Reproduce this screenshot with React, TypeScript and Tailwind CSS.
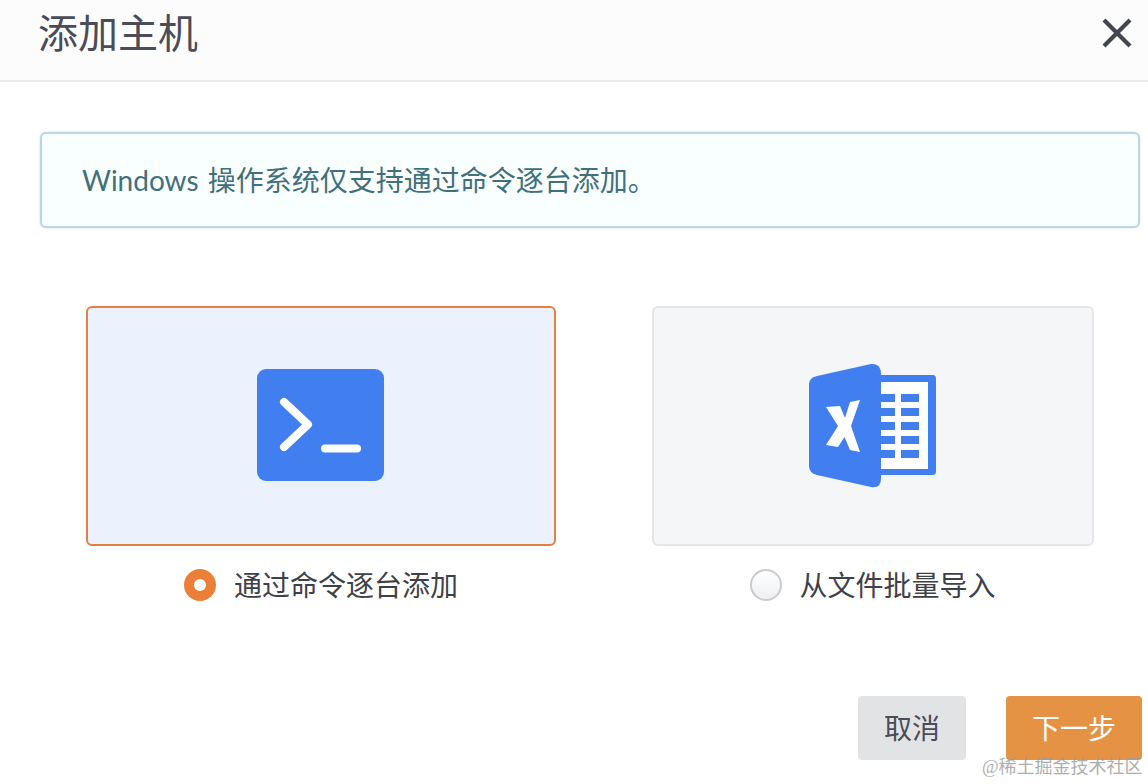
export default function App() {
  const sans = "font-['Lato','Noto_Sans_CJK_SC',sans-serif]";
  return (
    <div className={`relative flex h-[784px] w-[1148px] flex-col overflow-hidden bg-white ${sans}`}>
      <header className="flex h-[82px] shrink-0 items-center justify-between border-b-2 border-[#e9eaec] bg-[#fcfcfd] pb-[14px] pl-[38px] pr-[14px]">
        <h1 className="text-[40px] leading-[56px] font-normal text-[#4a4c58]">添加主机</h1>
        <svg width="34" height="34" viewBox="0 0 34 34">
          <path d="M4 4 L30 30 M30 4 L4 30" stroke="#43454f" strokeWidth="4.2" fill="none" />
        </svg>
      </header>

      <div className="ml-[40px] mr-[8px] mt-[50px] flex h-[96px] items-center rounded-[6px] border-2 border-[#bbd7e0] bg-[#f9feff] pl-[40px] text-[28px] font-normal text-[#41707c] shadow-[0_0_3px_#cfdfe5] [word-spacing:2px]">
        Windows 操作系统仅支持通过命令逐台添加。
      </div>

      <div className="ml-[86px] mt-[78px] flex gap-[96px]">
        <div className="flex w-[470px] flex-col items-center">
          <div className="flex h-[240px] w-full items-center justify-center rounded-[6px] border-2 border-[#e67f3f] bg-[#ebf2fd]">
            <svg width="128" height="112" viewBox="0 0 128 112" className="mb-[2px]">
              <rect x="0" y="0" width="127" height="112" rx="9" fill="#417ef0" />
              <path d="M27 33 L51 55.5 L27 78" stroke="#fff" strokeWidth="8" strokeLinecap="round" strokeLinejoin="round" fill="none" />
              <path d="M68 79.5 H100" stroke="#fff" strokeWidth="8" strokeLinecap="round" fill="none" />
            </svg>
          </div>
          <div className="mt-[23px] flex items-center gap-[18px]">
            <span className="flex h-[32px] w-[32px] items-center justify-center rounded-full bg-[#ec7f37]">
              <span className="h-[12px] w-[12px] rounded-full bg-white" />
            </span>
            <span className="text-[28px] leading-[32px] text-[#3f4149]">通过命令逐台添加</span>
          </div>
        </div>

        <div className="flex w-[442px] flex-col items-center">
          <div className="flex h-[240px] w-full items-center justify-center rounded-[6px] border-2 border-[#e4e6e9] bg-[#f4f6f8]">
            <svg width="128" height="126" viewBox="0 0 128 126" className="mb-[1px]">
              <path d="M8 13 L62 1 Q72 0 72 11 V115 Q72 126 62 124 L8 112 Q0 110 0 103 V21 Q0 15 8 13 Z" fill="#417ef0" />
              <path d="M72 12 H124 Q127 12 127 16 V108 Q127 112 124 112 H72 Z" fill="#417ef0" />
              <rect x="72" y="19" width="47" height="87" fill="#fff" />
              <g fill="#417ef0">
                <rect x="72" y="31" width="14" height="8" />
                <rect x="92" y="31" width="18" height="8" />
                <rect x="72" y="45" width="14" height="8" />
                <rect x="92" y="45" width="18" height="8" />
                <rect x="72" y="59" width="14" height="8" />
                <rect x="92" y="59" width="18" height="8" />
                <rect x="72" y="73" width="14" height="8" />
                <rect x="92" y="73" width="18" height="8" />
                <rect x="72" y="87" width="14" height="8" />
                <rect x="92" y="87" width="18" height="8" />
              </g>
              <path d="M17 44 L31 43 L36 55 L41 39 L51 37 L42 63 L51 89 L41 87 L35.500 74 L29 84 L17 82 L29 63 Z" fill="#fff" />
            </svg>
          </div>
          <div className="mt-[23px] flex items-center gap-[17px]">
            <span className="h-[32px] w-[32px] rounded-full border-2 border-[#c9cbcf] bg-gradient-to-b from-white to-[#eeeff1]" />
            <span className="text-[28px] leading-[32px] text-[#3f4149]">从文件批量导入</span>
          </div>
        </div>
      </div>

      <div className="ml-[858px] mt-[95px] flex gap-[40px]">
        <button className="flex h-[64px] w-[108px] items-center justify-center rounded-[4px] bg-[#e2e3e5] text-[28px] text-[#4a4c58]">取消</button>
        <button className="flex h-[64px] w-[136px] items-center justify-center rounded-[4px] bg-[#e59245] text-[28px] text-white">下一步</button>
      </div>

      <span className="absolute left-[982px] top-[756px] font-['Liberation_Serif','Noto_Sans_CJK_SC',serif] text-[18px] leading-[22px] text-[#9b9b9b] opacity-80">@稀土掘金技术社区</span>
    </div>
  );
}
